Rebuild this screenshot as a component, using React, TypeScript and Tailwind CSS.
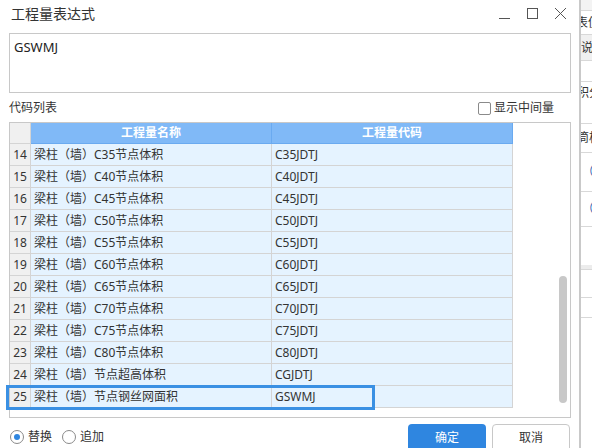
import React from "react";

interface Row {
  no: number;
  name: string;
  code: string;
}

const rows: Row[] = [
  { no: 14, name: "梁柱（墙）C35节点体积", code: "C35JDTJ" },
  { no: 15, name: "梁柱（墙）C40节点体积", code: "C40JDTJ" },
  { no: 16, name: "梁柱（墙）C45节点体积", code: "C45JDTJ" },
  { no: 17, name: "梁柱（墙）C50节点体积", code: "C50JDTJ" },
  { no: 18, name: "梁柱（墙）C55节点体积", code: "C55JDTJ" },
  { no: 19, name: "梁柱（墙）C60节点体积", code: "C60JDTJ" },
  { no: 20, name: "梁柱（墙）C65节点体积", code: "C65JDTJ" },
  { no: 21, name: "梁柱（墙）C70节点体积", code: "C70JDTJ" },
  { no: 22, name: "梁柱（墙）C75节点体积", code: "C75JDTJ" },
  { no: 23, name: "梁柱（墙）C80节点体积", code: "C80JDTJ" },
  { no: 24, name: "梁柱（墙）节点超高体积", code: "CGJDTJ" },
  { no: 25, name: "梁柱（墙）节点钢丝网面积", code: "GSWMJ" },
];

const TitleButtons = () => (
  <div className="flex items-center h-full">
    <svg width="28" height="20" viewBox="0 0 28 20" className="text-[#555]">
      <line x1="8" y1="18.5" x2="19" y2="18.5" stroke="currentColor" strokeWidth="1" />
    </svg>
    <svg width="28" height="20" viewBox="0 0 28 20" className="text-[#555]">
      <rect x="8.5" y="8.5" width="10" height="10" fill="none" stroke="currentColor" strokeWidth="1" />
    </svg>
    <svg width="28" height="20" viewBox="0 0 28 20" className="text-[#555]">
      <path d="M8 8 L19 19 M19 8 L8 19" stroke="currentColor" strokeWidth="1" />
    </svg>
  </div>
);

const App = () => {
  return (
    <div className="w-[592px] h-[448px] flex overflow-hidden bg-white text-[#333] font-['Noto_Sans','Noto_Sans_CJK_SC',sans-serif]">
      {/* dialog */}
      <div className="w-[579px] h-full flex flex-col shrink-0 overflow-hidden">
        <div className="h-[33px] shrink-0 flex items-start justify-between pl-[11px] pr-[10px]">
          <div className="text-[14px] leading-[20px] pt-[4px]">工程量表达式</div>
          <div className="h-[20px] -mr-[6px]">
            <TitleButtons />
          </div>
        </div>

        <div className="px-[9px] shrink-0">
          <div className="w-[562px] h-[60px] border border-[#c8c8c8] px-[4px] pt-[4px] text-[13px] leading-[18px] text-[#222]">
            GSWMJ
          </div>

          <div className="h-[29px] flex items-center justify-between pr-[16px] pt-[1px]">
            <span className="text-[12px]">代码列表</span>
            <label className="flex items-center gap-[3px] text-[12px]">
              <span className="w-[13px] h-[13px] border border-[#8a8a8a] rounded-[2px] bg-white" />
              显示中间量
            </label>
          </div>

          {/* table */}
          <div className="relative w-[562px] h-[296px] border border-[#c8c8c8] bg-white">
            <div className="w-[503px]">
              <div className="flex h-[21px] text-[12px]">
                <div className="w-[21px] bg-[#f0f0f0] border-r border-b border-[#d4d4d4]" />
                <div className="w-[241px] bg-[#80b9f7] border-r border-b border-[#6aaaf0] text-white font-bold flex items-center justify-center">
                  工程量名称
                </div>
                <div className="w-[241px] bg-[#80b9f7] border-r border-b border-[#6aaaf0] text-white font-bold flex items-center justify-center">
                  工程量代码
                </div>
              </div>
              {rows.map((r) => (
                <div key={r.no} className="flex h-[22px] text-[12px]">
                  <div className="w-[21px] bg-[#f0f0f0] border-r border-b border-[#d4d4d4] flex items-center justify-center text-[#333]">
                    {r.no}
                  </div>
                  <div className="w-[241px] bg-[#e5f3ff] border-r border-b border-[#d4d4d4] flex items-center pl-[3px] whitespace-nowrap">
                    {r.name}
                  </div>
                  <div className="w-[241px] bg-[#e5f3ff] border-r border-b border-[#d4d4d4] flex items-center pl-[3px]">
                    {r.code}
                  </div>
                </div>
              ))}
            </div>

            {/* selected row frame */}
            <div className="absolute left-[-4px] top-[262px] w-[369px] h-[25px] border-[3px] border-[#3a90e3]" />

            {/* scrollbar */}
            <div className="absolute left-[549px] top-[153px] w-[8px] h-[127px] rounded-full bg-[#c8c8c8]" />
          </div>

          <div className="flex justify-between pt-[6px]">
            <div className="flex items-center h-[26px] text-[12px] gap-[10px] pl-[1px]">
              <label className="flex items-center gap-[4px]">
                <span className="w-[14px] h-[14px] rounded-full border border-[#8a8a8a] flex items-center justify-center bg-white">
                  <span className="w-[6px] h-[6px] rounded-full bg-[#2f86e0]" />
                </span>
                替换
              </label>
              <label className="flex items-center gap-[4px]">
                <span className="w-[14px] h-[14px] rounded-full border border-[#8a8a8a] bg-white" />
                追加
              </label>
            </div>
            <div className="flex gap-[6px]">
              <button className="w-[78px] h-[28px] rounded-[4px] bg-[#2f86e0] text-white text-[12px]">
                确定
              </button>
              <button className="w-[78px] h-[28px] rounded-[4px] border border-[#c8c8c8] bg-white text-[12px] text-[#333]">
                取消
              </button>
            </div>
          </div>
        </div>
      </div>

      {/* dialog edge */}
      <div className="w-[2px] h-full bg-[#c9c9c9] shrink-0" />

      {/* window behind */}
      <div className="flex-1 h-full flex flex-col overflow-hidden text-[12px] text-[#333] bg-white">
        <div className="h-[11px] shrink-0 bg-[#f3f3f3] border-b border-[#d8d8d8]" />
        <div className="h-[24px] shrink-0 border-b border-[#d8d8d8] flex items-center whitespace-nowrap -ml-[5px]">表值</div>
        <div className="h-[26px] shrink-0 bg-[#f0f0f0] border-b border-[#d8d8d8] flex items-center whitespace-nowrap">说明</div>
        <div className="h-[21px] shrink-0 border-b border-[#d8d8d8]" />
        <div className="h-[21px] shrink-0 flex items-center whitespace-nowrap -ml-[4px]">积分</div>
        <div className="h-[21px] shrink-0 border-b border-[#d8d8d8]" />
        <div className="h-[29px] shrink-0 border-b border-[#d8d8d8] flex items-center whitespace-nowrap -ml-[4px]">筒柱</div>
        <div className="h-[39px] shrink-0 border-b border-[#d8d8d8] flex items-center whitespace-nowrap pl-[1px] text-[#2f5fb0]">（梁</div>
        <div className="h-[35px] shrink-0 border-b border-[#d8d8d8] flex items-center whitespace-nowrap pl-[1px] text-[#2f5fb0]">（柱</div>
        <div className="h-[38px] shrink-0" />
        <div className="h-[5px] shrink-0 bg-[#ececec] border-b border-[#d8d8d8]" />
        <div className="h-[28px] shrink-0 border-b border-[#d8d8d8]" />
        <div className="h-[20px] shrink-0 border-b border-[#d8d8d8]" />
        <div className="flex-1" />
      </div>
    </div>
  );
};

export default App;
